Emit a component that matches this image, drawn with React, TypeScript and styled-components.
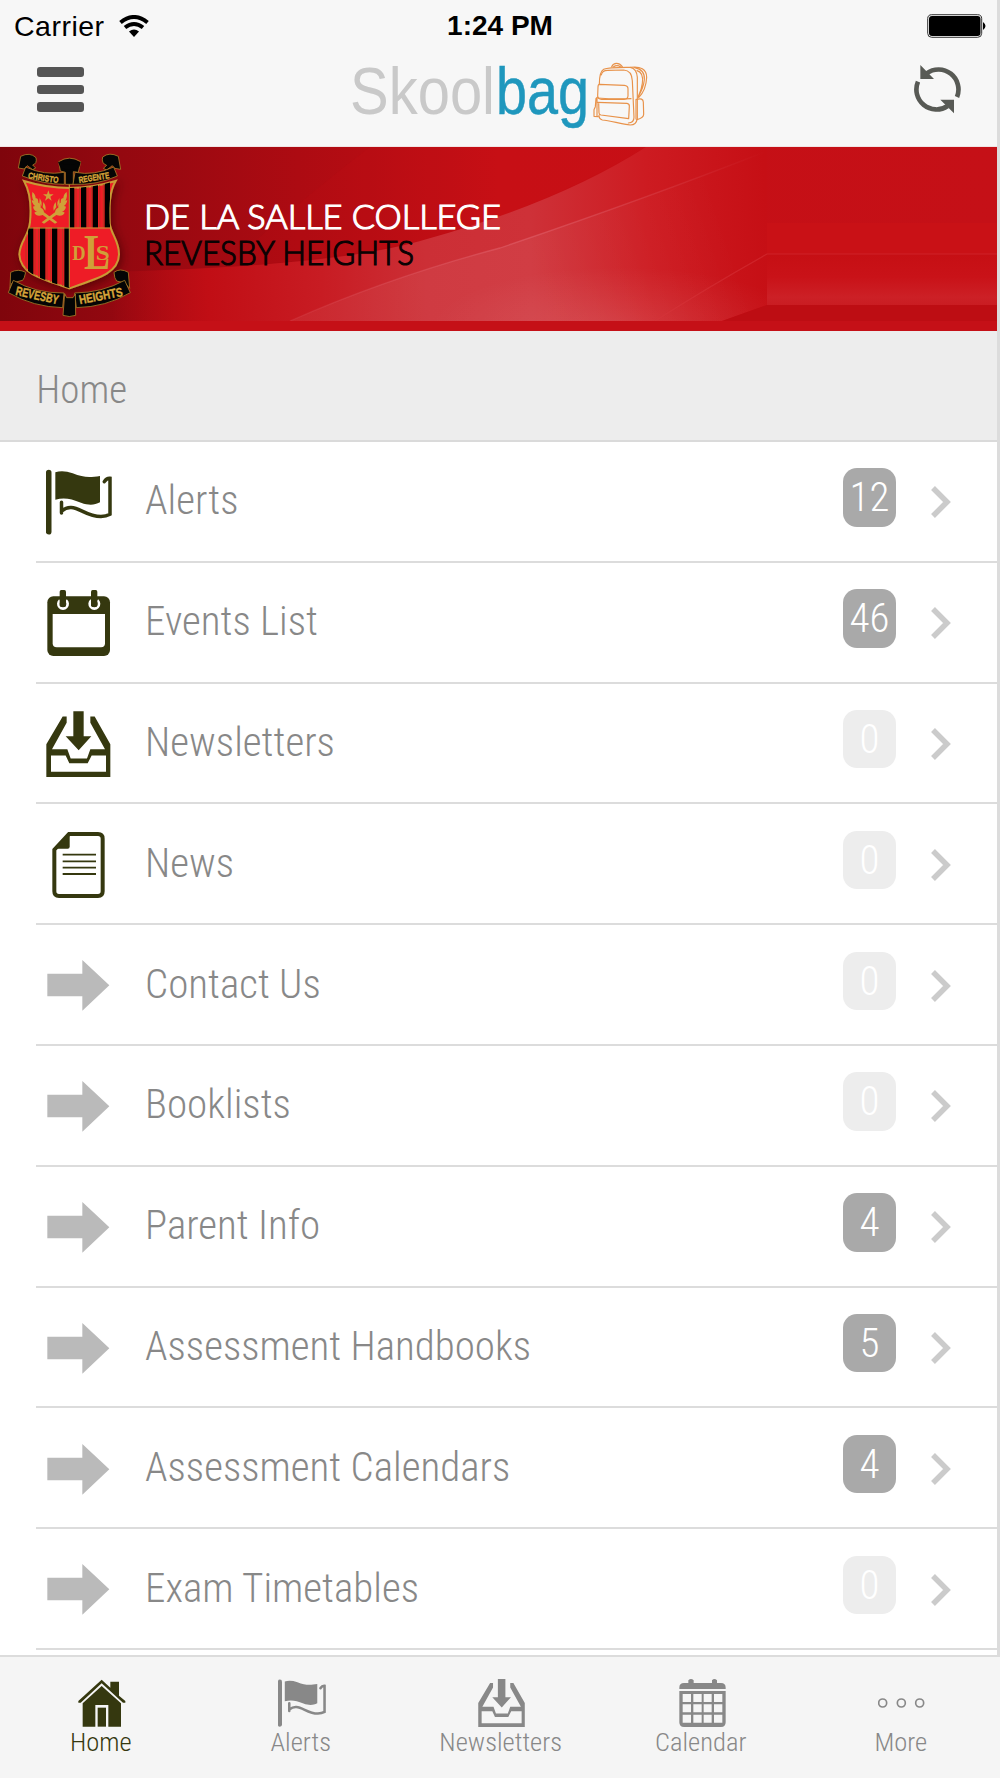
import styled, { createGlobalStyle } from "styled-components";

const GlobalStyle = createGlobalStyle`
  * {
    box-sizing: border-box;
  }
  body {
    margin: 0;
    background-color: #ffffff;
    font-family: "Roboto Condensed", Roboto, sans-serif;
    font-stretch: 75%;
    font-weight: 300;
  }
`;
const Screen = styled.div`
  width: 1000px;
  height: 1778px;
  display: flex;
  flex-direction: column;
  overflow: hidden;
`;
const Page = styled.div`
  height: 1655px;
  border-right: 3px solid #dcdcdc;
  overflow: hidden;
`;
const TopBar = styled.header`
  height: 147px;
  background-color: #f7f7f7;
  border-bottom: 1px solid #f1e4e4;
`;
const StatusBar = styled.div`
  height: 50px;
  padding: 2px 11px 0 14px;
  display: grid;
  grid-template-columns: 1fr auto 1fr;
  align-items: center;
  font-family: "Liberation Sans", Arial, sans-serif;
  font-stretch: normal;
  font-size: 28.5px;
  font-weight: 400;
  color: black;
`;
const Carrier = styled.div`
  display: flex;
  align-items: center;
  gap: 14px;
  letter-spacing: 0.5px;
`;
const Time = styled.div`
  font-size: 28px;
  font-weight: 700;
`;
const Battery = styled.svg`
  justify-self: end;
`;
const NavBar = styled.div`
  height: 96px;
  padding: 0 36px 0 37px;
  display: flex;
  justify-content: space-between;
  align-items: flex-start;
`;
const MenuButton = styled.button`
  width: 47px;
  margin-top: 17px;
  padding: 0;
  border: none;
  background: none;
  display: grid;
  gap: 8px;
  span {
    height: 9.6px;
    border-radius: 3px;
    background-color: #555555;
  }
`;
const Brand = styled.svg`
  margin-left: -1px;
`;
const Refresh = styled.svg`
  margin-top: 15px;
`;
const Banner = styled.section`
  position: relative;
  height: 184px;
  background-color: #c51017;
  display: flex;
`;
const BannerArt = styled.svg`
  position: absolute;
  top: 0;
  left: 0;
`;
const Crest = styled.svg`
  position: relative;
  margin-top: -2px;
`;
const SchoolName = styled.svg`
  position: relative;
  margin-left: -10px;
`;
const Heading = styled.h1`
  margin: 0;
  height: 111px;
  padding: 0 0 0 36.3px;
  background-color: #ededed;
  border-bottom: 2px solid #dadada;
  color: #888888;
  font-size: 39px;
  font-weight: 300;
  line-height: 119px;
`;
const List = styled.ul`
  margin: 0;
  padding: 0 0 0 36px;
  list-style: none;
`;
const Row = styled.li`
  height: 120.8px;
  padding: 26.4px 46px 0 10px;
  border-bottom: 2.6px solid #dcdcdc;
  display: flex;
`;
const Icon = styled.svg<{ $size: number }>`
  width: ${(props) => props.$size}px;
  height: ${(props) => props.$size}px;
  flex: none;
  fill: currentColor;
`;
const RowIcon = styled.div<{ $muted: boolean }>`
  margin-top: 0.9px;
  color: ${(props) => (props.$muted ? "#bababa" : "#35380f")};
`;
const RowLabel = styled.span`
  flex: 1;
  margin-left: 33px;
  color: #888888;
  font-size: 41px;
  line-height: 65px;
`;
const Badge = styled.span<{ $empty: boolean }>`
  width: 53px;
  height: 58.4px;
  border-radius: 14px;
  background-color: ${(props) => (props.$empty ? "#ededed" : "#a9a9a9")};
  color: ${(props) => (props.$empty ? "#ffffff" : "#ffffff")};
  font-size: 41px;
  line-height: 59px;
  text-align: center;
`;
const Chevron = styled.svg`
  margin: 17px 0 0 35px;
`;
const TabBar = styled.nav`
  height: 123px;
  background-color: #f5f5f5;
  border-top: 2px solid #dcdcdc;
  display: grid;
  grid-template-columns: repeat(5, 1fr);
`;
const Tab = styled.div<{ $active: boolean }>`
  padding: 22px 0 0 1.5px;
  display: flex;
  flex-direction: column;
  align-items: center;
  color: ${(props) => (props.$active ? "#35380f" : "#888888")};
  svg {
    margin-left: 1.5px;
  }
`;
const TabLabel = styled.span`
  font-size: 26.5px;
  line-height: 29px;
`;

function FlagIcon({ size }: { size: number }) {
  return (
    <Icon $size={size} viewBox="138 418 198 198">
      <path
        d="M146 429V606"
        stroke="currentColor"
        strokeWidth="17"
        strokeLinecap="round"
      />
      <path d="M166 428Q189 421 218 431C250 444 268 444 300 439V518C283 526 268 528 243 519C212 507 193 503 166 510Z" />
      <path
        d="M184.500 518V550M184.500 544C205 528 220 532 248 545Q300 571 330 554V446Q320 445 313 456"
        fill="none"
        stroke="currentColor"
        strokeWidth="10.500"
        strokeLinecap="round"
      />
    </Icon>
  );
}
function EventsIcon({ size }: { size: number }) {
  return (
    <Icon $size={size} viewBox="138 780 198 198">
      <rect x="142" y="799" width="188" height="179" rx="18" />
      <path
        d="M158 852H315V940Q315 952 303 952H170Q158 952 158 940Z"
        fill="#ffffff"
      />
      <path
        d="M180 811A14 14 0 1 0 198 811M274 811A14 14 0 1 0 292 811"
        fill="none"
        stroke="#ffffff"
        strokeWidth="8"
      />
      <rect x="179" y="780" width="19" height="51" rx="5" />
      <rect x="273" y="780" width="19" height="51" rx="5" />
    </Icon>
  );
}
function InboxIcon({ size }: { size: number }) {
  return (
    <Icon $size={size} viewBox="138 62.5 198 198">
      <path
        fillRule="evenodd"
        d="M188 79H200V98L156 177H202L212 205H261L271 177H315L271 98V79H284L331 162V261H139V162ZM153 196V245H318V196H275L263 219H208L197 196Z"
      />
      <path d="M220 63H251V138H274L236 180L197 138H220Z" />
    </Icon>
  );
}
function NewsIcon({ size }: { size: number }) {
  return (
    <Icon $size={size} viewBox="138 425 198 198">
      <path
        d="M207 431H294Q308 431 308 445V603Q308 617 294 617H177Q163 617 163 603V478Z"
        fill="none"
        stroke="currentColor"
        strokeWidth="12"
      />
      <path d="M209 428V469Q209 475 203 475H160Z" />
      <path
        d="M188 493H288M188 513H288M188 532H288M188 551H288"
        stroke="currentColor"
        strokeWidth="5.500"
      />
    </Icon>
  );
}
function ArrowIcon({ size }: { size: number }) {
  return (
    <Icon $size={size} viewBox="138 787 198 198">
      <path d="M142 852H247V811L328 887L247 963V920H142Z" />
    </Icon>
  );
}
function HomeIcon({ size }: { size: number }) {
  return (
    <Icon $size={size} viewBox="233 117 144 144">
      <path d="M234 183L304 119L330 143V125H356V167L375 183V188H368L304 130L241 188H234Z" />
      <path d="M247 190L304 138L362 190V260H324V195H285V260H247Z" />
      <rect x="292" y="203" width="25" height="57" />
    </Icon>
  );
}
function CalendarIcon({ size }: { size: number }) {
  return (
    <Icon $size={size} viewBox="535 117 144 144">
      <path d="M539 147V143Q539 129 553 129H566V121Q574 113 582 121V129H637V121Q644 113 652 121V129H664Q678 129 678 143V147Z" />
      <path
        fillRule="evenodd"
        d="M539 153H678V247Q678 261 664 261H553Q539 261 539 247ZM549 162V186H574V162ZM581 162V186H606V162ZM612 162V186H636V162ZM643 162V186H668V162ZM549 193V217H574V193ZM581 193V217H606V193ZM612 193V217H636V193ZM643 193V217H668V193ZM549 224V248H574V224ZM581 224V248H606V224ZM612 224V248H636V224ZM643 224V248H668V224Z"
      />
    </Icon>
  );
}
function MoreIcon({ size }: { size: number }) {
  return (
    <Icon $size={size} viewBox="1134 117 144 144">
      <g fill="none" stroke="currentColor" strokeWidth="5">
        <circle cx="1148" cy="189" r="12" />
        <circle cx="1204" cy="189" r="12" />
        <circle cx="1259" cy="189" r="12" />
      </g>
    </Icon>
  );
}

const rows = [
  { label: "Alerts", count: 12, icon: FlagIcon },
  { label: "Events List", count: 46, icon: EventsIcon },
  { label: "Newsletters", count: 0, icon: InboxIcon },
  { label: "News", count: 0, icon: NewsIcon },
  { label: "Contact Us", count: 0, icon: ArrowIcon },
  { label: "Booklists", count: 0, icon: ArrowIcon },
  { label: "Parent Info", count: 4, icon: ArrowIcon },
  { label: "Assessment Handbooks", count: 5, icon: ArrowIcon },
  { label: "Assessment Calendars", count: 4, icon: ArrowIcon },
  { label: "Exam Timetables", count: 0, icon: ArrowIcon },
];
const tabs = [
  { label: "Home", icon: HomeIcon },
  { label: "Alerts", icon: FlagIcon },
  { label: "Newsletters", icon: InboxIcon },
  { label: "Calendar", icon: CalendarIcon },
  { label: "More", icon: MoreIcon },
];

function BrandLogo() {
  return (
    <Brand width="300" height="86" viewBox="348 50 300 86">
      <g fontFamily="Liberation Sans, Arial, sans-serif" fontSize="67.5">
        <text
          x="349"
          y="113.500"
          fill="#c9c9c9"
          textLength="145"
          lengthAdjust="spacingAndGlyphs"
        >
          Skool
        </text>
        <text
          x="495"
          y="113.500"
          fill="#1f97bd"
          stroke="#1f97bd"
          strokeWidth="0.500"
          textLength="93"
          lengthAdjust="spacingAndGlyphs"
        >
          bag
        </text>
      </g>
      <g
        transform="translate(500 0) scale(0.33333)"
        fill="none"
        stroke="#e8924a"
        strokeWidth="3.500"
        strokeLinejoin="round"
        strokeLinecap="round"
      >
        <path d="M295 253C295 232 297 214 308 208C322 201 366 202 388 202C402 205 408 216 409 232L409 355C407 368 398 375 388 375C360 372 328 362 304 360C296 358 294 352 294 346" />
        <path d="M301 225C303 213 310 211 320 211L368 210C384 211 393 222 394 242L399 352C399 364 392 369 382 369M332 200C338 187 354 187 364 200M337 201Q348 193 359 201" />
        <path d="M295 253L370 256Q381 257 381 266V288Q380 298 369 298L302 298Q290 297 290 287L291 262Q291 253 295 253Z" />
        <path d="M290 294Q340 298 390 296M289 307L378 310Q386 311 385 319L383 356L300 345Q294 344 294 338L293 308" />
        <path d="M290 291L285 295L283 320L279 329V349L292 350M288 296V348" />
        <path d="M389 202C418 198 437 208 437 232C436 255 430 276 413 293M408 212C423 216 427 229 424 250C422 269 416 280 411 291M401 203C417 206 432 216 430 239C428 260 422 273 412 289" />
        <path d="M405 299Q427 292 427 307L428 343Q428 354 408 359M405 298V357" />
      </g>
    </Brand>
  );
}

function SchoolCrest() {
  return (
    <Crest width="150" height="180" viewBox="0 0 450 540">
      <defs>
        <clipPath id="shield">
          <path d="M72 108Q208 150 347 108C328 140 327 182 329 235C333 268 357 286 357 328C356 382 304 398 208 430C110 398 60 382 58 328C61 284 84 280 90 232C95 182 90 140 72 108Z" />
        </clipPath>
        <filter id="glow" x="-20%" y="-20%" width="150%" height="150%">
          <feDropShadow
            dx="6"
            dy="8"
            stdDeviation="14"
            floodColor="#300000"
            floodOpacity="0.6"
          />
        </filter>
      </defs>
      <g filter="url(#glow)">
        <path
          d="M72 108Q208 150 347 108C328 140 327 182 329 235C333 268 357 286 357 328C356 382 304 398 208 430C110 398 60 382 58 328C61 284 84 280 90 232C95 182 90 140 72 108Z"
          fill="#ee1c25"
          stroke="#c99a35"
          strokeWidth="6"
        />
        <g clipPath="url(#shield)">
          <path
            d="M215 100V248M251 100V248M286 100V248M322 100V248M92 248V440M128 248V440M164 248V440M201 248V440"
            stroke="#050505"
            strokeWidth="16"
          />
          <path
            d="M228 100V248M239 100V248M264 100V248M275 100V248M299 100V248M310 100V248M78 248V440M105 248V440M116 248V440M141 248V440M152 248V440M177 248V440M188 248V440"
            stroke="#b03a20"
            strokeWidth="2.500"
          />
        </g>
        <path d="M208 112V428M85 249H332" stroke="#c99a35" strokeWidth="3" />
      </g>
      <g fill="#050505" stroke="#a87c28" strokeWidth="2.500">
        <path d="M176 50Q208 29 242 50L235 82L220 80V118H196V82L181 78Z" />
        <path d="M174 50Q208 69 242 50L238 66Q208 84 180 66Z" stroke="none" />
        <path d="M62 34Q90 20 108 38Q112 56 98 60L107 69L98 74L82 62L73 72L55 69Z" />
        <path d="M355 34Q328 20 308 36Q303 55 320 61L310 70L320 75L337 62L344 70L362 73Z" />
        <path d="M77 66Q132 92 193 82V118Q130 118 67 93Z" />
        <path d="M341 66Q282 93 225 82L219 118Q291 121 352 93Z" />
        <path d="M32 382Q55 370 77 382Q73 402 68 406L36 414L30 430Z" />
        <path d="M385 382Q360 368 342 382Q343 401 350 408L374 414L389 430Z" />
        <path d="M40 406Q107 445 192 444L188 488Q100 486 25 443Z" />
        <path d="M374 406Q307 443 224 444L229 488Q318 486 391 443Z" />
        <path d="M194 446L200 458H219L226 447L227 511Q208 518 189 511Z" />
      </g>
      <g
        fill="#d8a63a"
        stroke="#d8a63a"
        strokeWidth="1.200"
        fontFamily="Liberation Sans, Arial, sans-serif"
        fontWeight="700"
      >
        <text
          x="83"
          y="100"
          fontSize="26"
          transform="rotate(9 83 100)"
          textLength="92"
          lengthAdjust="spacingAndGlyphs"
        >
          CHRISTO
        </text>
        <text
          x="238"
          y="114"
          fontSize="26"
          transform="rotate(-9 238 114)"
          textLength="92"
          lengthAdjust="spacingAndGlyphs"
        >
          REGENTE
        </text>
        <text
          x="45"
          y="449"
          fontSize="38"
          transform="rotate(13 45 449)"
          textLength="131"
          lengthAdjust="spacingAndGlyphs"
        >
          REVESBY
        </text>
        <text
          x="240"
          y="478"
          fontSize="38"
          transform="rotate(-11 240 478)"
          textLength="132"
          lengthAdjust="spacingAndGlyphs"
        >
          HEIGHTS
        </text>
      </g>
      <g
        fill="#d0a038"
        fontFamily="Liberation Serif, Times New Roman, serif"
        fontWeight="700"
      >
        <text x="217" y="345" fontSize="60" textLength="40" lengthAdjust="spacingAndGlyphs">
          D
        </text>
        <text x="252" y="372" fontSize="152" textLength="78" lengthAdjust="spacingAndGlyphs">
          L
        </text>
        <text x="287" y="345" fontSize="62" textLength="42" lengthAdjust="spacingAndGlyphs">
          S
        </text>
      </g>
      <g fill="#d0a038">
        <path d="M145 136L149 148H161L151 155L155 167L145 160L135 167L139 155L129 148H141Z" />
        <g id="laurel">
          <path d="M97 141Q107 148 107 160Q115 158 115 173Q124 174 122 188Q131 191 132 202L172 232L165 236L128 210Q109 216 103 203Q111 196 120 202Q101 200 99 185Q108 180 115 189Q96 180 95 166Q104 166 109 177Q93 164 97 141Z" />
          <path d="M119 159Q127 170 125 183L118 175ZM130 171Q140 184 136 197L128 186Z" />
        </g>
        <use href="#laurel" transform="translate(297 0) scale(-1 1)" />
      </g>
    </Crest>
  );
}

function BannerBackground() {
  return (
    <BannerArt width="997" height="174" viewBox="0 0 997 174">
      <defs>
        <linearGradient id="base">
          <stop offset="0" stopColor="#7f050c" />
          <stop offset="0.12" stopColor="#940810" />
          <stop offset="0.3" stopColor="#ad0b12" />
          <stop offset="0.5" stopColor="#c60f15" />
          <stop offset="1" stopColor="#c51017" />
        </linearGradient>
        <linearGradient
          id="wave"
          gradientUnits="userSpaceOnUse"
          x1="110"
          y1="110"
          x2="767"
          y2="90"
        >
          <stop offset="0" stopColor="#c50d14" stopOpacity="0" />
          <stop offset="0.15" stopColor="#c10e15" />
          <stop offset="0.32" stopColor="#c81c23" />
          <stop offset="0.48" stopColor="#cc2f36" />
          <stop offset="0.64" stopColor="#ce3138" />
          <stop offset="0.82" stopColor="#cd1b21" />
          <stop offset="1" stopColor="#c60f15" />
        </linearGradient>
        <linearGradient
          id="sheen"
          gradientUnits="userSpaceOnUse"
          x1="380"
          y1="174"
          x2="720"
          y2="60"
        >
          <stop offset="0" stopColor="#ffffff" stopOpacity="0.06" />
          <stop offset="0.45" stopColor="#ffffff" stopOpacity="0.06" />
          <stop offset="1" stopColor="#ffffff" stopOpacity="0" />
        </linearGradient>
        <linearGradient id="glint">
          <stop offset="0" stopColor="#e0606a" stopOpacity="0.3" />
          <stop offset="0.5" stopColor="#e0606a" />
          <stop offset="1" stopColor="#e0606a" stopOpacity="0" />
        </linearGradient>
        <linearGradient id="lower" x2="0" y2="1">
          <stop offset="0" stopColor="#c60f14" />
          <stop offset="0.45" stopColor="#c91218" />
          <stop offset="0.85" stopColor="#cc2026" />
          <stop offset="1" stopColor="#c91c22" />
        </linearGradient>
        <radialGradient
          id="foot"
          gradientUnits="userSpaceOnUse"
          cx="0"
          cy="0"
          r="1"
          gradientTransform="translate(620 182) scale(190 62)"
        >
          <stop offset="0" stopColor="#ffffff" stopOpacity="0.11" />
          <stop offset="1" stopColor="#ffffff" stopOpacity="0" />
        </radialGradient>
      </defs>
      <rect width="997" height="174" fill="url(#base)" />
      <path
        d="M260 90Q330 30 370 0H646Q590 35 500 70L420 94Q350 110 230 120Z"
        fill="#d0141a"
        opacity="0.12"
      />
      <path
        d="M60 126Q330 122 427 92Q560 55 646 0H767V174H60Z"
        fill="url(#wave)"
      />
      <path d="M290 174Q390 130 500 101Q650 50 767 4V174Z" fill="url(#sheen)" />
      <path
        d="M290 174Q390 130 500 101Q650 50 767 4"
        fill="none"
        stroke="url(#glint)"
        strokeWidth="1.300"
        opacity="0.6"
      />
      <path d="M390 110H767V158L722 174H390Z" fill="url(#foot)" />
      <rect x="767" y="76" width="230" height="31" fill="#c91116" />
      <rect x="767" y="107" width="230" height="51" fill="url(#lower)" />
      <rect x="767" y="158" width="230" height="16" fill="#bd0d13" />
      <path d="M722 174L767 158V174Z" fill="#bd0d13" />
      <path
        d="M655 174Q705 142 767 107H997"
        fill="none"
        stroke="#d7363c"
        strokeWidth="1.200"
        opacity="0.5"
      />
    </BannerArt>
  );
}

function App() {
  return (
    <Screen>
      <GlobalStyle />
      <Page>
        <TopBar>
          <StatusBar>
            <Carrier>
              Carrier
              <svg width="30" height="23" viewBox="0 0 30 23">
                <g fill="none" stroke="#000000" strokeWidth="4">
                  <path d="M1.500 7.500Q15 -3.500 28.500 7.500" />
                  <path d="M6 12.500Q15 5.500 24 12.500" />
                </g>
                <path d="M10 16.500Q15 12.500 20 16.500L15 22Z" />
              </svg>
            </Carrier>
            <Time>1:24 PM</Time>
            <Battery width="59" height="24" viewBox="0 0 59 24">
              <rect
                x="0.700"
                y="0.700"
                width="54"
                height="22.600"
                rx="4"
                fill="none"
                stroke="#333333"
                strokeWidth="1"
              />
              <rect x="2" y="2" width="51.500" height="20" rx="3" />
              <path d="M56 8Q61 12 56 16Z" />
            </Battery>
          </StatusBar>
          <NavBar>
            <MenuButton>
              <span />
              <span />
              <span />
            </MenuButton>
            <BrandLogo />
            <Refresh width="47" height="49" viewBox="1242 196 141 147">
              <g fill="none" stroke="#585a55" strokeWidth="14">
                <path d="M1280 221A60 60 0 0 1 1371 292" />
                <path d="M1254 246A60 60 0 0 0 1343 319" />
              </g>
              <path
                d="M1261 196V238H1302ZM1362 341V300H1321Z"
                fill="#585a55"
              />
            </Refresh>
          </NavBar>
        </TopBar>
        <Banner>
          <BannerBackground />
          <SchoolCrest />
          <SchoolName width="400" height="150" viewBox="140 147 400 150">
            <g fontFamily="Lato, sans-serif" fontSize="33.5" strokeWidth="1.200">
              <text
                x="144"
                y="229"
                fill="#ffffff"
                stroke="#ffffff"
                textLength="357"
                lengthAdjust="spacingAndGlyphs"
              >
                DE LA SALLE COLLEGE
              </text>
              <text
                x="144"
                y="265"
                fill="#0a0203"
                stroke="#0a0203"
                textLength="270"
                lengthAdjust="spacingAndGlyphs"
              >
                REVESBY HEIGHTS
              </text>
            </g>
          </SchoolName>
        </Banner>
        <Heading>Home</Heading>
        <List>
          {rows.map((row) => (
            <Row key={row.label}>
              <RowIcon $muted={row.icon === ArrowIcon}>
                <row.icon size={66} />
              </RowIcon>
              <RowLabel>{row.label}</RowLabel>
              <Badge $empty={row.count === 0}>{row.count}</Badge>
              <Chevron width="20" height="34" viewBox="0 0 20 34">
                <path
                  d="M2 3L16 17L2 31"
                  fill="none"
                  stroke="#cbcbcb"
                  strokeWidth="5.500"
                />
              </Chevron>
            </Row>
          ))}
        </List>
      </Page>
      <TabBar>
        {tabs.map((tab, index) => (
          <Tab key={tab.label} $active={index === 0}>
            <tab.icon size={48} />
            <TabLabel>{tab.label}</TabLabel>
          </Tab>
        ))}
      </TabBar>
    </Screen>
  );
}
export default App;
